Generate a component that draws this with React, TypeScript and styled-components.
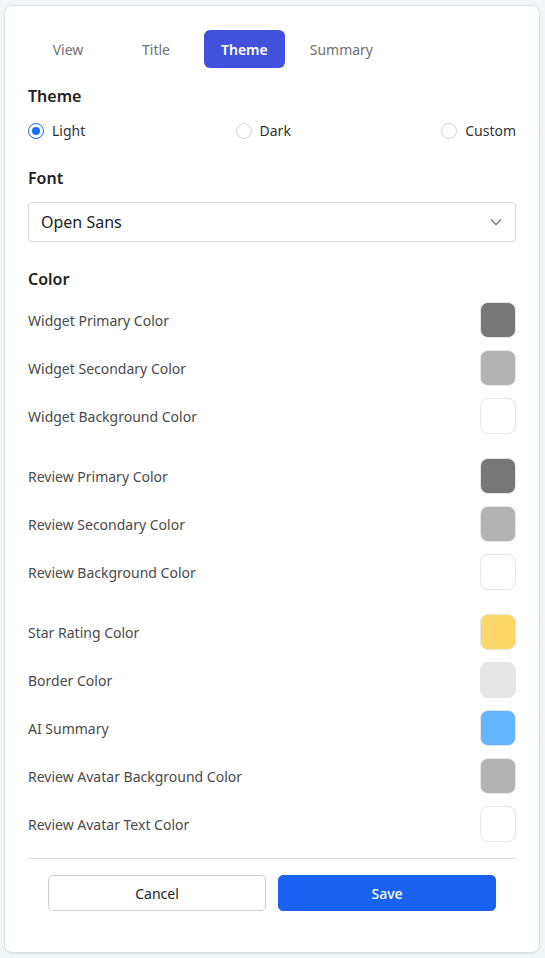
import React, { useState } from 'react'
import styled, { createGlobalStyle } from 'styled-components'

const GlobalStyle = createGlobalStyle`
  body {
    margin: 0;
    background: #f0f5f8;
    font-family: 'Noto Sans', 'Open Sans', sans-serif;
    color: #222;
  }
`

const Page = styled.div`
  padding: 5px 5px 6px 4px;
`

const Card = styled.div`
  background: #fff;
  border: 1px solid #d9dee2;
  border-radius: 8px;
  box-shadow: 0 1px 2px rgba(0, 0, 0, 0.06);
  padding: 24px 23px 41px 23px;
`

const Tabs = styled.div`
  display: flex;
  gap: 8px;
  margin-bottom: 17px;
`

const Tab = styled.button<{ $active?: boolean }>`
  min-width: 80px;
  height: 38px;
  padding: 0 17px;
  border: none;
  border-radius: 6px;
  font-family: inherit;
  font-size: 14px;
  font-weight: ${(p) => (p.$active ? 600 : 400)};
  color: ${(p) => (p.$active ? '#fff' : '#707070')};
  background: ${(p) => (p.$active ? '#4251dc' : 'transparent')};
  cursor: pointer;
`

const Heading = styled.h3`
  margin: 0;
  font-size: 16px;
  line-height: 22px;
  font-weight: 600;
  color: #222;
`

const RadioRow = styled.div`
  display: flex;
  justify-content: space-between;
  margin-top: 14px;
  margin-bottom: 26px;
`

const RadioLabel = styled.label`
  display: flex;
  align-items: center;
  gap: 8px;
  font-size: 14px;
  line-height: 20px;
  color: #333;
  cursor: pointer;
`

const RadioDot = styled.span<{ $checked?: boolean }>`
  width: 16px;
  height: 16px;
  box-sizing: border-box;
  border-radius: 50%;
  border: 1px solid ${(p) => (p.$checked ? '#1a6ef0' : '#d4d4d4')};
  display: flex;
  align-items: center;
  justify-content: center;
  &::after {
    content: '';
    width: 8px;
    height: 8px;
    border-radius: 50%;
    background: ${(p) => (p.$checked ? '#1a6ef0' : 'transparent')};
  }
`

const Select = styled.div`
  margin-top: 13px;
  margin-bottom: 26px;
  height: 40px;
  box-sizing: border-box;
  border: 1px solid #dcdcdc;
  border-radius: 4px;
  padding: 0 13px 0 12px;
  display: flex;
  align-items: center;
  justify-content: space-between;
  font-size: 16px;
  color: #222;
`

const ColorList = styled.div`
  margin-top: 12px;
  display: flex;
  flex-direction: column;
`

const Group = styled.div`
  display: flex;
  flex-direction: column;
  gap: 12px;
  & + & {
    margin-top: 24px;
  }
`

const ColorRow = styled.div`
  display: flex;
  align-items: center;
  justify-content: space-between;
  height: 36px;
`

const ColorName = styled.span`
  font-size: 14px;
  color: #4a4a4a;
`

const Swatch = styled.div<{ $color: string }>`
  width: 36px;
  height: 36px;
  box-sizing: border-box;
  border-radius: 8px;
  border: 1px solid #e6e6e6;
  background: ${(p) => p.$color};
`

const Divider = styled.hr`
  border: none;
  border-top: 1px solid #dedede;
  margin: 16px 0 16px;
`

const Footer = styled.div`
  display: grid;
  grid-template-columns: 1fr 1fr;
  gap: 12px;
  padding: 0 20px;
`

const Button = styled.button<{ $primary?: boolean }>`
  height: 36px;
  border-radius: 5px;
  font-family: inherit;
  font-size: 14px;
  cursor: pointer;
  border: 1px solid ${(p) => (p.$primary ? '#1961ef' : '#cfcfcf')};
  background: ${(p) => (p.$primary ? '#1961ef' : '#fff')};
  color: ${(p) => (p.$primary ? '#fff' : '#222')};
  font-weight: ${(p) => (p.$primary ? 500 : 400)};
`

const groups: { name: string; color: string }[][] = [
  [
    { name: 'Widget Primary Color', color: '#777777' },
    { name: 'Widget Secondary Color', color: '#b3b3b3' },
    { name: 'Widget Background Color', color: '#ffffff' },
  ],
  [
    { name: 'Review Primary Color', color: '#777777' },
    { name: 'Review Secondary Color', color: '#b3b3b3' },
    { name: 'Review Background Color', color: '#ffffff' },
  ],
  [
    { name: 'Star Rating Color', color: '#ffd86b' },
    { name: 'Border Color', color: '#e6e6e6' },
    { name: 'AI Summary', color: '#63b5fe' },
    { name: 'Review Avatar Background Color', color: '#b3b3b3' },
    { name: 'Review Avatar Text Color', color: '#ffffff' },
  ],
]

const tabs = ['View', 'Title', 'Theme', 'Summary']
const themes = ['Light', 'Dark', 'Custom']

export default function App() {
  const [tab, setTab] = useState('Theme')
  const [theme, setTheme] = useState('Light')

  return (
    <>
      <GlobalStyle />
      <Page>
        <Card>
          <Tabs>
            {tabs.map((t) => (
              <Tab key={t} $active={t === tab} onClick={() => setTab(t)}>
                {t}
              </Tab>
            ))}
          </Tabs>

          {/* theme */}
          <Heading>Theme</Heading>
          <RadioRow>
            {themes.map((t) => (
              <RadioLabel key={t} onClick={() => setTheme(t)}>
                <RadioDot $checked={t === theme} />
                {t}
              </RadioLabel>
            ))}
          </RadioRow>

          {/* font */}
          <Heading>Font</Heading>
          <Select>
            Open Sans
            <svg width="12" height="8" viewBox="0 0 12 8" fill="none">
              <path d="M1 1.5l5 5 5-5" stroke="#777" strokeWidth="1.3" />
            </svg>
          </Select>

          {/* colors */}
          <Heading>Color</Heading>
          <ColorList>
            {groups.map((g, i) => (
              <Group key={i}>
                {g.map((c) => (
                  <ColorRow key={c.name}>
                    <ColorName>{c.name}</ColorName>
                    <Swatch $color={c.color} />
                  </ColorRow>
                ))}
              </Group>
            ))}
          </ColorList>

          <Divider />
          <Footer>
            <Button>Cancel</Button>
            <Button $primary>Save</Button>
          </Footer>
        </Card>
      </Page>
    </>
  )
}
